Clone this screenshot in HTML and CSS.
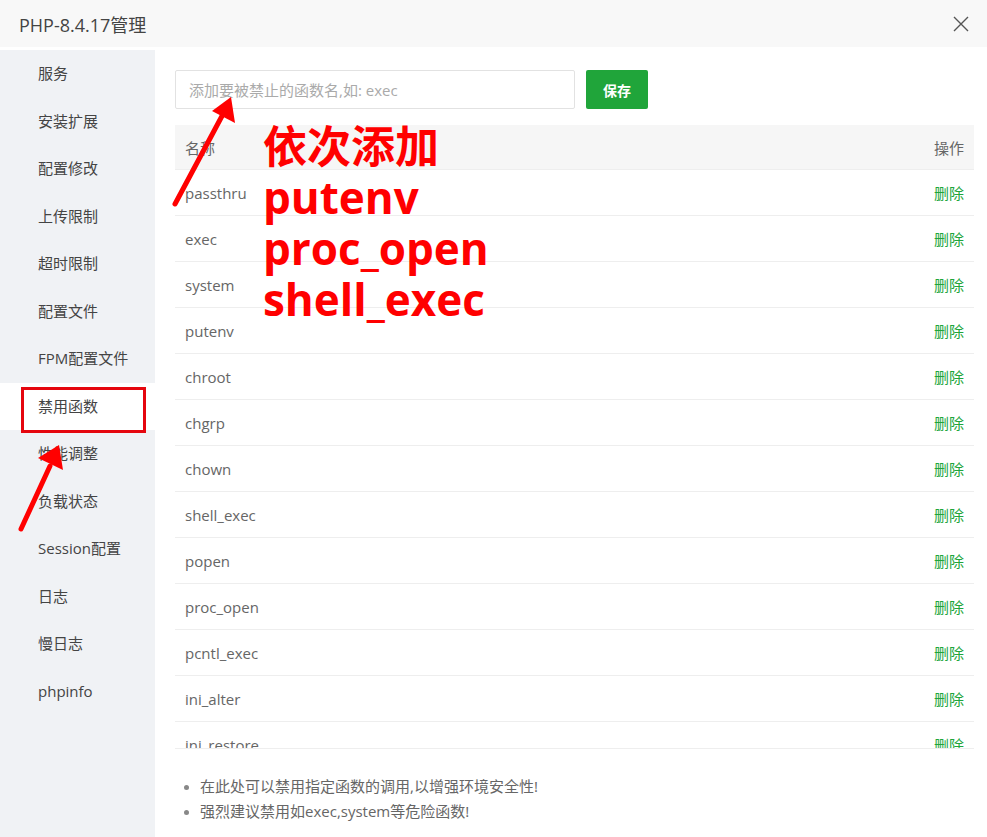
FILE: index.html
```html
<!DOCTYPE html>
<html lang="zh-CN">
<head>
  <meta charset="UTF-8" />
  <meta name="viewport" content="width=device-width, initial-scale=1.0" />
  <title>PHP-8.4.17管理</title>
  <link rel="stylesheet" href="styles.css">
</head>
<body>

  <!-- Dialog header -->
  <div class="dlg-head">
    <span class="dlg-title">PHP-8.4.17管理</span>
    <span class="dlg-close">
      <svg width="16" height="16" viewBox="0 0 16 16"><path d="M1 1 L15 15 M15 1 L1 15" stroke="#555" stroke-width="1.4" fill="none"/></svg>
    </span>
  </div>

  <div class="dlg-body">
    <!-- Left menu -->
    <ul class="side-menu">
      <li>服务</li>
      <li>安装扩展</li>
      <li>配置修改</li>
      <li>上传限制</li>
      <li>超时限制</li>
      <li>配置文件</li>
      <li>FPM配置文件</li>
      <li class="active">禁用函数</li>
      <li>性能调整</li>
      <li>负载状态</li>
      <li>Session配置</li>
      <li>日志</li>
      <li>慢日志</li>
      <li>phpinfo</li>
    </ul>

    <!-- Main panel -->
    <div class="panel">
      <div class="add-row">
        <input class="fn-input" type="text" placeholder="添加要被禁止的函数名,如: exec">
        <button class="btn-save">保存</button>
      </div>

      <div class="table-wrap">
        <table class="fn-table">
          <thead>
            <tr><th>名称</th><th class="op">操作</th></tr>
          </thead>
          <tbody>
            <tr><td>passthru</td><td class="op"><a href="#">删除</a></td></tr>
            <tr><td>exec</td><td class="op"><a href="#">删除</a></td></tr>
            <tr><td>system</td><td class="op"><a href="#">删除</a></td></tr>
            <tr><td>putenv</td><td class="op"><a href="#">删除</a></td></tr>
            <tr><td>chroot</td><td class="op"><a href="#">删除</a></td></tr>
            <tr><td>chgrp</td><td class="op"><a href="#">删除</a></td></tr>
            <tr><td>chown</td><td class="op"><a href="#">删除</a></td></tr>
            <tr><td>shell_exec</td><td class="op"><a href="#">删除</a></td></tr>
            <tr><td>popen</td><td class="op"><a href="#">删除</a></td></tr>
            <tr><td>proc_open</td><td class="op"><a href="#">删除</a></td></tr>
            <tr><td>pcntl_exec</td><td class="op"><a href="#">删除</a></td></tr>
            <tr><td>ini_alter</td><td class="op"><a href="#">删除</a></td></tr>
            <tr><td>ini_restore</td><td class="op"><a href="#">删除</a></td></tr>
            <tr><td>dl</td><td class="op"><a href="#">删除</a></td></tr>
          </tbody>
        </table>
      </div>

      <ul class="tips">
        <li>在此处可以禁用指定函数的调用,以增强环境安全性!</li>
        <li>强烈建议禁用如exec,system等危险函数!</li>
      </ul>
    </div>
  </div>

  <!-- Red annotations drawn on top of the screenshot -->
  <div class="note-text">
    <div>依次添加</div>
    <div>putenv</div>
    <div>proc_open</div>
    <div>shell_exec</div>
  </div>
  <div class="note-box"></div>
  <svg class="note-arrows" width="987" height="837" viewBox="0 0 987 837">
    <path d="M175 204 L222 116" stroke="#f00" stroke-width="5" stroke-linecap="round" fill="none"/>
    <polygon points="231,97 212,111 235,123" fill="#f00"/>
    <path d="M21 529 L50 466" stroke="#f00" stroke-width="5" stroke-linecap="round" fill="none"/>
    <polygon points="59,445 38,458 63,470" fill="#f00"/>
  </svg>

</body>
</html>
```

FILE: styles.css
```css
/* Global */
body {
  margin: 0;
  width: 987px;
  height: 837px;
  overflow: hidden;
  position: relative;
  background: #fff;
  font-family: 'Open Sans', 'Noto Sans CJK SC', sans-serif;
  color: #555;
}
/* Header */
.dlg-head {
  height: 47px;
  background: #f8f8f8;
  display: flex;
  align-items: center;
  justify-content: space-between;
  padding: 0 18px 0 19px;
}
.dlg-title {
  font-size: 18px;
  color: #444;
}
.dlg-close {
  display: flex;
  align-items: center;
}
/* Body */
.dlg-body {
  display: flex;
  height: 790px;
}
/* Left menu */
.side-menu {
  list-style: none;
  margin: 3px 0 0 0;
  padding: 0;
  width: 155px;
  background: #f0f2f5;
  flex-shrink: 0;
}
.side-menu li {
  height: 47.5px;
  line-height: 47.5px;
  padding-left: 38px;
  font-size: 15px;
  color: #444;
}
.side-menu li.active {
  background: #fff;
}
/* Main panel */
.panel {
  flex: 1;
  padding: 23px 13px 0 20px;
  min-width: 0;
}
.add-row {
  display: flex;
  gap: 11px;
}
.fn-input {
  width: 400px;
  height: 39px;
  box-sizing: border-box;
  border: 1px solid #e2e2e2;
  border-radius: 2px;
  padding: 0 13px;
  font-family: inherit;
  font-size: 15px;
  color: #555;
  outline: none;
}
.fn-input::placeholder {
  color: #aaa;
}
.btn-save {
  width: 62px;
  height: 39px;
  border: none;
  border-radius: 2px;
  background: #20a53a;
  color: #fff;
  font-family: inherit;
  font-size: 14px;
  font-weight: bold;
}
/* Table */
.table-wrap {
  margin-top: 16px;
  height: 624px;
  overflow: hidden;
  border-bottom: 1px solid #eee;
  box-sizing: border-box;
}
.fn-table {
  width: 100%;
  border-collapse: collapse;
  font-size: 15px;
}
.fn-table th {
  height: 44px;
  background: #f6f6f6;
  font-weight: normal;
  text-align: left;
  color: #666;
  padding: 0 10px;
}
.fn-table td {
  height: 45px;
  border-top: 1px solid #eee;
  padding: 0 10px;
  color: #666;
}
.fn-table .op {
  text-align: right;
}
.fn-table a {
  color: #20a53a;
  text-decoration: none;
}
/* Tips */
.tips {
  margin: 25px 0 0 0;
  padding-left: 25px;
  font-size: 15px;
  color: #666;
  line-height: 25px;
}
.tips li::marker {
  color: #888;
  font-size: 13px;
}
/* Annotations */
.note-text {
  position: absolute;
  left: 263px;
  top: 121px;
  color: #f00;
  font-size: 44px;
  font-weight: bold;
  line-height: 51px;
}
.note-box {
  position: absolute;
  left: 21px;
  top: 387px;
  width: 119px;
  height: 40px;
  border: 3px solid #e5060e;
}
.note-arrows {
  position: absolute;
  left: 0;
  top: 0;
}
```
